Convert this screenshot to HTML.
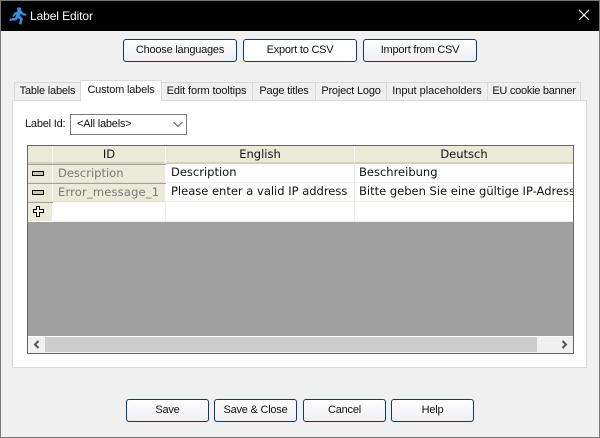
<!DOCTYPE html>
<html><head><meta charset="utf-8"><style>
html,body{margin:0;padding:0;width:600px;height:438px;overflow:hidden;background:#f0f0f0}
*{box-sizing:border-box}
div{position:absolute;white-space:nowrap}
.t{font:11px/14px "Liberation Sans",sans-serif;letter-spacing:-.2px;color:#111}
.btn{border:1px solid #0a3a6e;border-radius:3px;background:linear-gradient(#fff,#eeeef5);font:11px/21px "Liberation Sans",sans-serif;letter-spacing:-.22px;text-align:center;color:#111;height:23px}
.tab{top:82px;height:18px;background:#f0f0f0;border:1px solid #d9d9d9;border-bottom:none;border-left:none;font:11px/17px "Liberation Sans",sans-serif;letter-spacing:-.2px;text-align:center;color:#111}
.g{font:11.5px/14px "DejaVu Sans",sans-serif;color:#111;overflow:hidden}
.h{background:#ebe9d8;border-right:1px solid #fff;border-bottom:1px solid #e2dfcd}
.c{background:#fff;border-right:1px solid #f0eee2;border-bottom:1px solid #f0eee2}
</style></head><body>
<div style="left:0;top:0;width:600px;height:438px;border:1px solid #787878;background:#f0f0f0"></div>
<div style="left:1px;top:1px;width:598px;height:30px;background:#000"></div>
<svg style="position:absolute;left:8px;top:6px" width="20" height="19" viewBox="0 0 20 19"><path d="M11 1.500a1.800 1.800 0 1 1 0 3.600a1.800 1.800 0 0 1 0-3.600zM9.500 5.500l-3 1.500-2 3 1.300.7 1.700-2.200 1.300-.3-1.600 4-5 .5-.7 1.800 6.700-.3 1.800-2.400 2.300 1.800-1 4.400 1.900.3 1.500-5.700-3-2.700 1.100-2.800 1.300 1.800 3.800.6.2-1.500-3-.7-1.900-2.900z" fill="#3b8ede" stroke="#3b8ede" stroke-width=".5"/></svg>
<div class="t" style="left:30px;top:9px;color:#fff;font-size:12px;letter-spacing:-.1px">Label Editor</div>
<svg style="position:absolute;left:578px;top:9px" width="12" height="12" viewBox="0 0 12 12"><path d="M1 1l10 10M11 1L1 11" stroke="#fff" stroke-width="1.200" fill="none"/></svg>

<div class="btn" style="left:123px;top:39px;width:114px">Choose languages</div>
<div class="btn" style="left:243px;top:39px;width:114px;background:#fff">Export to CSV</div>
<div class="btn" style="left:363px;top:39px;width:114px">Import from CSV</div>

<div style="left:12px;top:100px;width:575px;height:268px;background:#fff;border:1px solid #d9d9d9"></div>
<div class="tab" style="left:14px;width:67px;border-left:1px solid #d9d9d9">Table labels</div>
<div class="tab" style="left:161px;width:92px;letter-spacing:-.12px">Edit form tooltips</div>
<div class="tab" style="left:253px;width:63px">Page titles</div>
<div class="tab" style="left:316px;width:71px">Project Logo</div>
<div class="tab" style="left:387px;width:101px;letter-spacing:-.02px">Input placeholders</div>
<div class="tab" style="left:488px;width:93px;letter-spacing:-.26px">EU cookie banner</div>
<div class="tab" style="left:80px;top:80px;width:82px;height:21px;background:#fff;border-left:1px solid #d9d9d9;line-height:18px">Custom labels</div>

<div class="t" style="left:25px;top:117px">Label Id:</div>
<div style="left:70px;top:114px;width:117px;height:21px;border:1px solid #7a7a7a;background:#fff"></div>
<div class="t" style="left:77px;top:117px">&lt;All labels&gt;</div>
<svg style="position:absolute;left:173px;top:121px" width="10" height="7" viewBox="0 0 10 7"><path d="M.5 1l4.500 4.500L9.500 1" stroke="#555" fill="none"/></svg>

<div style="left:27px;top:145px;width:547px;height:209px;border:1px solid #666;background:#a0a0a0"></div>
<div class="h" style="left:28px;top:146px;width:25px;height:18px;border-bottom:2px solid #d5d0bc"></div>
<div class="h g" style="left:53px;top:146px;width:113px;height:18px;border-bottom:2px solid #d5d0bc;text-align:center;line-height:17px">ID</div>
<div class="h g" style="left:166px;top:146px;width:189px;height:18px;border-bottom:2px solid #d5d0bc;text-align:center;line-height:17px">English</div>
<div class="h g" style="left:355px;top:146px;width:218px;height:18px;border-bottom:2px solid #d5d0bc;text-align:center;line-height:17px;border-right:none">Deutsch</div>

<div class="h" style="left:28px;top:165px;width:25px;height:18px"></div>
<div class="h g" style="left:53px;top:165px;width:113px;height:18px;padding-left:5px;line-height:17px;color:#777">Description</div>
<div class="c g" style="left:166px;top:164px;width:189px;height:19px;padding-left:5px;line-height:17px">Description</div>
<div class="c g" style="left:355px;top:164px;width:218px;height:19px;padding-left:4px;line-height:17px;border-right:none">Beschreibung</div>

<div class="h" style="left:28px;top:184px;width:25px;height:18px"></div>
<div class="h g" style="left:53px;top:184px;width:113px;height:18px;padding-left:5px;line-height:16px;letter-spacing:.18px;color:#777">Error_message_1</div>
<div class="c g" style="left:166px;top:183px;width:189px;height:19px;padding-left:5px;line-height:16px">Please enter a valid IP address</div>
<div class="c g" style="left:355px;top:183px;width:218px;height:19px;padding-left:4px;line-height:16px;border-right:none">Bitte geben Sie eine gültige IP-Adresse ein</div>

<div class="h" style="left:28px;top:203px;width:25px;height:19px;border-bottom:1px solid #fff"></div>
<div class="c" style="left:53px;top:202px;width:113px;height:20px"></div>
<div class="c" style="left:166px;top:202px;width:189px;height:20px"></div>
<div class="c" style="left:355px;top:202px;width:218px;height:20px;border-right:none"></div>

<div style="left:32px;top:171px;width:12px;height:5px;border:1px solid #000;background:#c8c6b8"></div>
<div style="left:32px;top:190px;width:12px;height:5px;border:1px solid #000;background:#c8c6b8"></div>
<svg style="position:absolute;left:33px;top:206px" width="11" height="11" viewBox="0 0 11 11"><path d="M3.500.5h3v3h4v3h-4v4h-3v-4h-3v-3h3z" fill="#f5f4ea" stroke="#000"/></svg>

<div style="left:28px;top:336px;width:545px;height:1px;background:#fff"></div>
<div style="left:28px;top:337px;width:545px;height:16px;background:#f0f0f0"></div>
<div style="left:45px;top:337px;width:492px;height:15px;background:#cdcdcd"></div>
<svg style="position:absolute;left:32px;top:340px" width="9" height="9" viewBox="0 0 9 9"><path d="M6.500 1L3 4.500 6.500 8" stroke="#555" stroke-width="2" fill="none"/></svg>
<svg style="position:absolute;left:560px;top:340px" width="9" height="9" viewBox="0 0 9 9"><path d="M2.500 1L6 4.500 2.500 8" stroke="#555" stroke-width="2" fill="none"/></svg>

<div class="btn" style="left:126px;top:399px;width:83px">Save</div>
<div class="btn" style="left:214px;top:399px;width:83px">Save &amp; Close</div>
<div class="btn" style="left:303px;top:399px;width:83px">Cancel</div>
<div class="btn" style="left:391px;top:399px;width:83px">Help</div>
</body></html>
